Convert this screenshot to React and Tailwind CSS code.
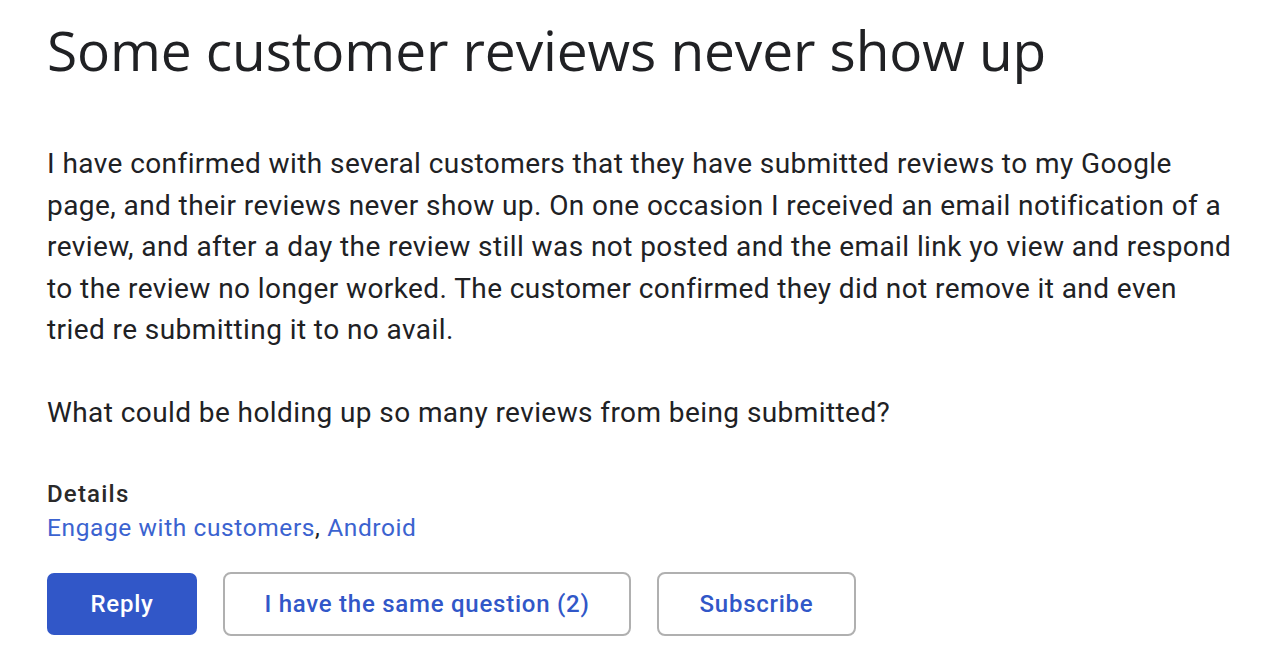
import React from "react";

const BODY = [
  "I have confirmed with several customers that they have submitted reviews to my Google",
  "page, and their reviews never show up. On one occasion I received an email notification of a",
  "review, and after a day the review still was not posted and the email link yo view and respond",
  "to the review no longer worked. The customer confirmed they did not remove it and even",
  "tried re submitting it to no avail.",
];

function App() {
  return (
    <div className="min-h-screen w-full bg-white text-[#202124]">
      <div className="pl-[47px] pt-[14px]">
        {/* Title */}
        <h1 className="font-['Open_Sans',sans-serif] text-[55px] leading-[72px] tracking-[-0.1px] whitespace-nowrap">
          Some customer reviews never show up
        </h1>

        {/* Body */}
        <div className="mt-[57px] font-['Roboto',sans-serif] text-[28px] leading-[41.5px] tracking-[0.42px] whitespace-nowrap">
          {BODY.map((line) => (
            <div key={line}>{line}</div>
          ))}
          <div className="mt-[41.5px]">
            What could be holding up so many reviews from being submitted?
          </div>
        </div>

        {/* Details */}
        <div className="mt-[43px] font-['Roboto',sans-serif]">
          <div className="text-[24px] leading-[34px] font-medium tracking-[1.2px] text-[#2a2a2a]">Details</div>
          <div className="text-[24.5px] leading-[34px] tracking-[0.6px]">
            <a href="#" className="text-[#3b63d0]">
              Engage with customers
            </a>
            ,{" "}
            <a href="#" className="text-[#3b63d0]">
              Android
            </a>
          </div>
        </div>

        {/* Actions */}
        <div className="mt-[27px] flex items-center gap-[26px] font-['Roboto',sans-serif] text-[24px] font-medium tracking-[0.75px]">
          <button className="h-[62px] w-[150px] rounded-[7px] bg-[#3157c8] text-white">
            Reply
          </button>
          <button className="h-[64px] w-[408px] rounded-[8px] border-2 border-[#b0b0b0] text-[#3157c8]">
            I have the same question (2)
          </button>
          <button className="h-[64px] w-[199px] rounded-[8px] border-2 border-[#b0b0b0] text-[#3157c8]">
            Subscribe
          </button>
        </div>
      </div>
    </div>
  );
}

export default App;
